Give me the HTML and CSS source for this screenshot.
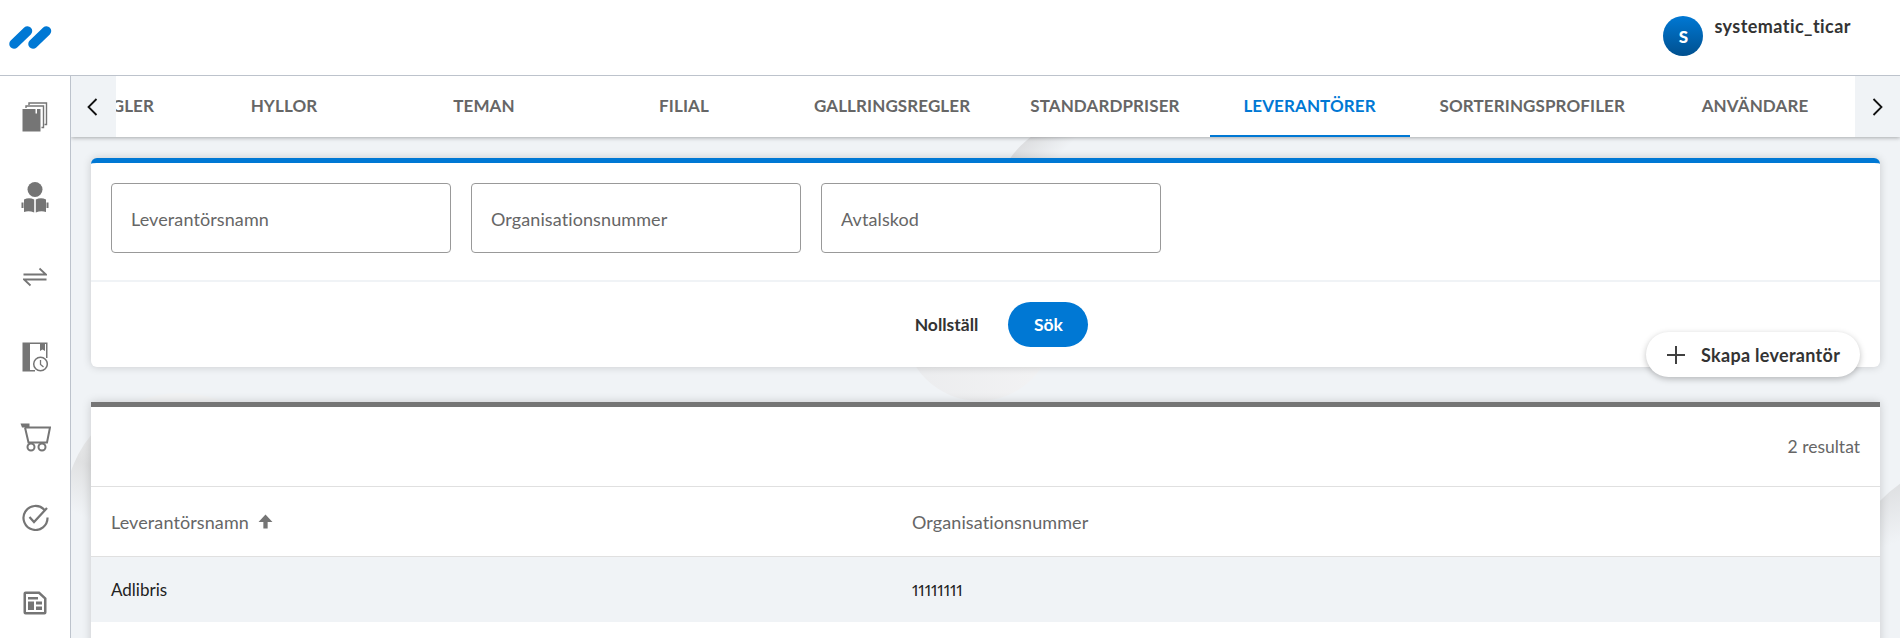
FILE: index.html
```html
<!DOCTYPE html>
<html lang="sv">
<head>
<meta charset="utf-8">
<title>Leverantörer</title>
<link rel="stylesheet" href="styles.css">
</head>
<body>
<header class="topbar">
  <svg class="logo" width="44" height="24" viewBox="0 0 44 24" aria-label="Logo"><g stroke="#0078d4" stroke-width="9.5" stroke-linecap="round"><line x1="6" y1="19" x2="19.5" y2="6"/><line x1="25" y1="19" x2="38.5" y2="6"/></g></svg>
  <div class="user">
    <span class="avatar">S</span>
    <span class="username">systematic_ticar</span>
  </div>
</header>
<div class="shell">
  <nav class="sidebar">
    <a class="nav-item"><svg width="26" height="30" viewBox="0 0 26 30"><g fill="none" stroke="#757575" stroke-width="1.4"><path d="M7 3V1H24.500V22.500H22.500"/><path d="M4 6V4H21.500V25.500H19.500"/></g><path fill="#757575" d="M0.500 7H18.500V29.500H0.500Z"/><path fill="#fff" d="M13.500 7H15V11.500H13.500Z"/></svg></a>
    <a class="nav-item"><svg width="28" height="31" viewBox="0 0 28 31"><circle cx="14" cy="7.500" r="7.500" fill="#757575"/><path fill="#757575" d="M3 17.500Q8 15 13.200 17.500V30.500Q8 28.500 3 30ZM25 17.500Q20 15 14.800 17.500V30.500Q20 28.500 25 30Z"/><path fill="#757575" d="M0.500 20.500H2.500V26H0.500ZM25.500 20.500H27.500V26H25.500Z"/></svg></a>
    <a class="nav-item"><svg width="24" height="20" viewBox="0 0 24 20"><g fill="none" stroke="#757575" stroke-width="1.800"><path d="M0.500 7.500H23L16.500 1.500"/><path d="M23.500 12.500H1L7.500 18.500"/></g></svg></a>
    <a class="nav-item"><svg width="26" height="30" viewBox="0 0 26 30"><path fill="#757575" d="M0.500 0.500H25.500V16H24V2H23V9L20.500 7.500L18 9V2H8V28H13V29.500H0.500Z"/><circle cx="18.500" cy="22" r="6.800" fill="#fff" stroke="#757575" stroke-width="1.500"/><path fill="none" stroke="#757575" stroke-width="1.300" d="M18.500 18V22.500L21.500 25"/></svg></a>
    <a class="nav-item"><svg width="31" height="29" viewBox="0 0 31 29"><path fill="#757575" d="M0.500 0.500H9.500V4.500H2Z"/><path fill="none" stroke="#757575" stroke-width="2" d="M5 4.500H30L27 19.500H8.500L5 4.500"/><circle cx="11" cy="24" r="3.500" fill="none" stroke="#757575" stroke-width="2"/><circle cx="22" cy="24" r="3.500" fill="none" stroke="#757575" stroke-width="2"/></svg></a>
    <a class="nav-item"><svg width="27" height="27" viewBox="0 0 27 27"><path fill="none" stroke="#757575" stroke-width="2.200" d="M22.500 6A12 12 0 1 0 25.500 13.500"/><path fill="none" stroke="#757575" stroke-width="2.200" d="M7.500 13L12 18L25 4"/></svg></a>
    <a class="nav-item nav-item-last"><svg width="24" height="24" viewBox="0 0 24 24"><path fill="#757575" d="M2.500 0.500H16.500L23.500 7V21.500A2 2 0 0 1 21.500 23.500H2.500A2 2 0 0 1 0.500 21.500V2.500A2 2 0 0 1 2.500 0.500Z"/><path fill="#fff" d="M3 3H15.500L21 8V21H3Z"/><path fill="#757575" d="M5 6H15V8.500H5ZM5 10.500H11V19H5ZM13 10.500H19V13.500H13ZM13 15.500H19V19H13Z"/></svg></a>
  </nav>
  <main class="main">
    <span class="blob blob-a"></span>
    <span class="blob blob-b"></span>
    <span class="blob blob-c"></span>
    <span class="blob blob-d"></span>
    <div class="tabbar">
      <button class="tab-arrow"><svg width="14" height="18" viewBox="0 0 14 18"><path fill="none" stroke="#111" stroke-width="1.800" d="M9.500 1L1.500 9L9.500 17"/></svg></button>
      <div class="tabs">
        <a class="tab">UTLÅNINGSREGLER</a>
        <a class="tab">HYLLOR</a>
        <a class="tab">TEMAN</a>
        <a class="tab">FILIAL</a>
        <a class="tab">GALLRINGSREGLER</a>
        <a class="tab">STANDARDPRISER</a>
        <a class="tab tab-active">LEVERANTÖRER</a>
        <a class="tab">SORTERINGSPROFILER</a>
        <a class="tab">ANVÄNDARE</a>
      </div>
      <button class="tab-arrow"><svg width="14" height="18" viewBox="0 0 14 18"><path fill="none" stroke="#111" stroke-width="1.800" d="M2.500 1L10.500 9L2.500 17"/></svg></button>
    </div>
    <section class="card card-search">
      <div class="fields">
        <label class="field field-wide"><input placeholder="Leverantörsnamn"></label>
        <label class="field"><input placeholder="Organisationsnummer"></label>
        <label class="field field-wide"><input placeholder="Avtalskod"></label>
      </div>
      <div class="actions">
        <button class="btn-text">Nollställ</button>
        <button class="btn-primary">Sök</button>
      </div>
      <button class="fab"><svg width="18" height="18" viewBox="0 0 18 18"><path stroke="#404040" stroke-width="2" d="M9 0V18M0 9H18"/></svg>Skapa leverantör</button>
    </section>
    <section class="card card-results">
      <div class="count">2 resultat</div>
      <div class="row row-head">
        <div class="cell cell-name">Leverantörsnamn <svg class="sort" width="15" height="15" viewBox="0 0 14 14"><path fill="#757575" d="M7 0.500L13.500 7.500H9V13.500H5V7.500H0.500Z"/></svg></div>
        <div class="cell">Organisationsnummer</div>
      </div>
      <div class="row row-data">
        <div class="cell cell-name">Adlibris</div>
        <div class="cell cell-num">11111111</div>
      </div>
    </section>
  </main>
</div>
</body>
</html>
```

FILE: styles.css
```css
* { box-sizing: border-box; }
html, body { height: 100%; }
body {
  margin: 0;
  height: 638px;
  overflow: hidden;
  background: #fff;
  color: #222;
  font-family: Lato, "Open Sans", Arial, sans-serif;
  display: flex;
  flex-direction: column;
}
button { font-family: inherit; border: 0; background: none; cursor: pointer; }

.topbar {
  flex: 0 0 76px;
  display: flex;
  align-items: flex-start;
  justify-content: space-between;
  padding: 25px 49px 0 8px;
  border-bottom: 1px solid #bdc3cc;
  background: #fff;
}
.logo { display: block; }
.user { display: flex; align-items: flex-start; gap: 11px; margin-top: -9px; }
.avatar {
  width: 40px; height: 40px;
  border-radius: 50%;
  background: linear-gradient(#0078d4, #00508f);
  color: #fff;
  font-weight: 900;
  font-size: 17px;
  display: flex; align-items: center; justify-content: center;
}
.username { font-size: 18px; font-weight: 700; color: #333; letter-spacing: .45px; line-height: 22px; margin-top: -1px; }

.shell { flex: 1; display: flex; min-height: 0; }
.sidebar {
  flex: 0 0 71px;
  border-right: 1px solid #bdc3cc;
  background: #fff;
  display: flex;
  flex-direction: column;
  align-items: center;
  padding-top: 1px;
}
.nav-item { flex: 0 0 80px; display: flex; align-items: center; justify-content: center; }
.nav-item svg { display: block; }
.nav-item-last { margin-top: 6px; }

.main {
  position: relative;
  flex: 1;
  min-width: 0;
  background: #f0f3f6;
  overflow: hidden;
  padding-bottom: 20px;
}
.blob { position: absolute; border-radius: 50%; }
.blob-a { width: 230px; height: 230px; left: -6px; top: 317px; background: linear-gradient(205deg, #f2f3f4 30%, #e0e1e2 50%, #f0f3f6 66%); }
.blob-b { width: 150px; height: 150px; left: 833px; top: 175px; background: linear-gradient(to right, #ebecee, #f3f3f4); }
.blob-c { width: 196px; height: 196px; left: 921px; top: 41px; background: linear-gradient(135deg, #dcdddf 14%, #f0f3f6 27%); }
.blob-d { width: 310px; height: 310px; left: 1764px; top: 379px; background: linear-gradient(160deg, #dcdddf 10%, #f0f3f6 26%); }

.tabbar {
  position: relative;
  height: 61px;
  display: flex;
  background: #fff;
  box-shadow: 0 1px 4px rgba(0, 0, 0, .3);
}
.tab-arrow {
  flex: 0 0 45px;
  padding: 0;
  background: #f0f3f6;
  display: flex; align-items: center; justify-content: center;
}
.tabs {
  flex: 1;
  min-width: 0;
  overflow: hidden;
  display: flex;
  justify-content: flex-end;
}
.tab {
  flex: 0 0 auto;
  min-width: 200px;
  padding: 0 30px;
  display: flex; align-items: center; justify-content: center;
  font-size: 17px;
  font-weight: 700;
  letter-spacing: .1px;
  color: #666;
  border-bottom: 2px solid transparent;
}
.tab-active { color: #0078d4; border-bottom-color: #0078d4; }

.card {
  position: relative;
  margin: 21px 20px 0;
  background: #fff;
  box-shadow: 0 0 9px rgba(0, 0, 0, .17);
}
.card-search { border-top: 5px solid #0078d4; border-radius: 6px; height: 209px; }
.fields { display: flex; gap: 20px; padding: 20px 20px 0; height: 119px; border-bottom: 2px solid #f0f3f6; }
.field { flex: 0 0 330px; height: 70px; display: block; }
.field-wide { flex-basis: 340px; }
.field input {
  width: 100%; height: 100%;
  padding: 2px 19px 0;
  border: 1px solid #999;
  border-radius: 4px;
  font: 400 18px Lato, sans-serif;
  letter-spacing: .1px;
  outline: 0;
}
.field input::placeholder { color: #666; opacity: 1; }
.actions { display: flex; justify-content: center; align-items: center; gap: 30px; padding: 20px 0 0 32px; }
.btn-text { font-size: 17.5px; font-weight: 700; color: #333; padding: 0; }
.btn-primary {
  width: 80px; height: 45px;
  border-radius: 23px;
  background: #0078d4;
  color: #fff;
  font-size: 17.5px;
  font-weight: 700;
}
.fab {
  position: absolute;
  right: 20px;
  top: 169px;
  width: 214px; height: 45px;
  border-radius: 23px;
  background: #fff;
  box-shadow: 0 2px 6px rgba(0, 0, 0, .25);
  display: flex; align-items: center; gap: 16px;
  padding: 0 0 0 21px;
  font-size: 18px;
  letter-spacing: .3px;
  font-weight: 700;
  color: #333;
}

.card-results { margin-top: 35px; border-top: 5px solid #757575; height: 300px; }
.count {
  height: 80px;
  display: flex; align-items: center; justify-content: flex-end;
  padding-right: 20px;
  font-size: 17.5px;
  color: #666;
  border-bottom: 1px solid #e0e0e0;
}
.row { display: flex; align-items: center; font-size: 18px; letter-spacing: .1px; }
.row-head { height: 70px; color: #666; border-bottom: 1px solid #e0e0e0; }
.row-data { height: 65px; background: #f0f3f6; color: #222; font-size: 17px; letter-spacing: 0; }
.cell { padding-left: 20px; }
.cell-name { flex: 0 0 801px; display: flex; align-items: center; gap: 9px; }
.cell-num { font-variant-numeric: proportional-nums; font-size: 16px; }
.sort { display: block; }
```
